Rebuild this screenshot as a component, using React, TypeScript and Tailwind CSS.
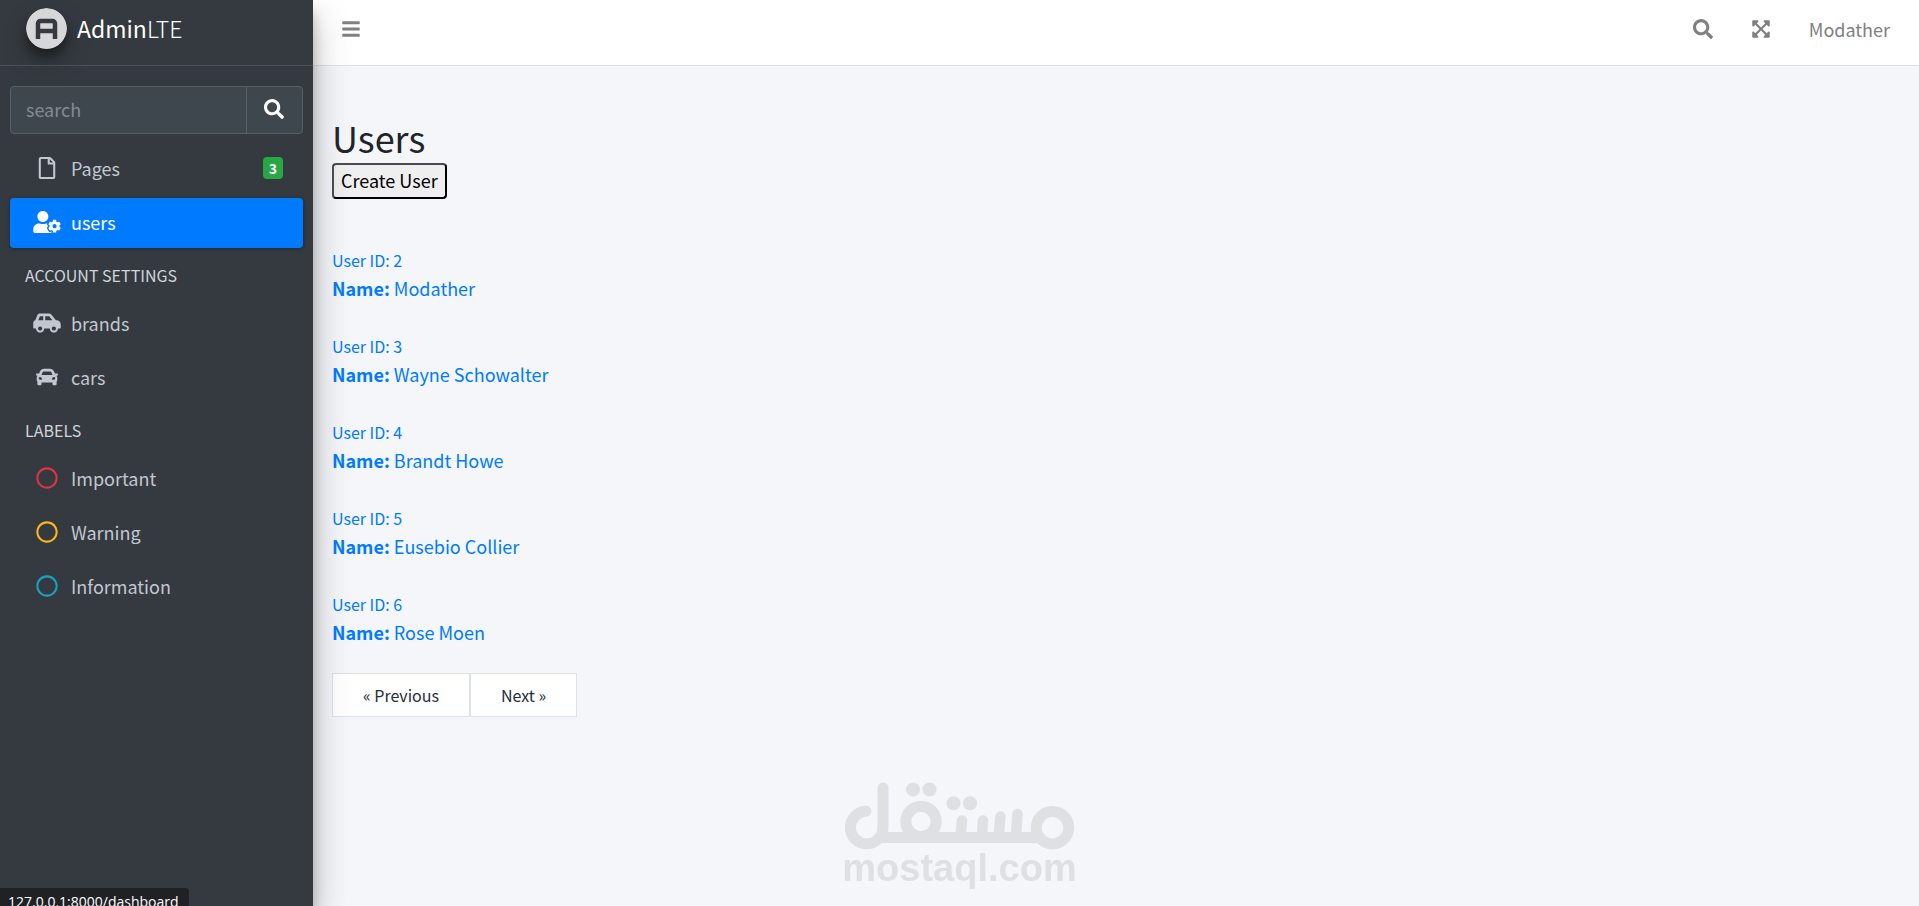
import { useState } from 'react'
import {
  FaBars,
  FaCar,
  FaCarSide,
  FaExpandArrowsAlt,
  FaRegCircle,
  FaRegFile,
  FaSearch,
  FaUserCog,
} from 'react-icons/fa'
import type { IconType } from 'react-icons'

interface NavItem {
  label: string
  icon: IconType
  iconClass?: string
  badge?: string
}

interface NavSection {
  header?: string
  items: NavItem[]
}

const sections: NavSection[] = [
  {
    items: [
      { label: 'Pages', icon: FaRegFile, badge: '3' },
      { label: 'users', icon: FaUserCog },
    ],
  },
  {
    header: 'ACCOUNT SETTINGS',
    items: [
      { label: 'brands', icon: FaCarSide },
      { label: 'cars', icon: FaCar },
    ],
  },
  {
    header: 'LABELS',
    items: [
      { label: 'Important', icon: FaRegCircle, iconClass: 'text-[#dc3545]' },
      { label: 'Warning', icon: FaRegCircle, iconClass: 'text-[#fdb71a]' },
      { label: 'Information', icon: FaRegCircle, iconClass: 'text-[#1aa2c4]' },
    ],
  },
]

const users = [
  { id: 2, name: 'Modather' },
  { id: 3, name: 'Wayne Schowalter' },
  { id: 4, name: 'Brandt Howe' },
  { id: 5, name: 'Eusebio Collier' },
  { id: 6, name: 'Rose Moen' },
]

function BrandLogo() {
  return (
    <svg
      viewBox="0 0 41 41"
      className="h-[41px] w-[41px] rounded-full shadow-[0_12px_24px_rgba(0,0,0,0.25),0_8px_8px_rgba(0,0,0,0.3)]"
      aria-hidden="true"
    >
      <circle cx="20.5" cy="20.5" r="20.5" fill="#d6d7d9" />
      <path d="M12 31V15.500a2.500 2.500 0 0 1 2.500-2.500h12a2.500 2.500 0 0 1 2.500 2.500V31M12 23h17" fill="none" stroke="#343a40" strokeWidth="4.500" />
    </svg>
  )
}

function Sidebar() {
  const [active, setActive] = useState('users')

  return (
    <aside className="relative z-10 w-[313px] shrink-0 bg-[#343a40] text-[#c2c7d0] shadow-[0_18px_35px_rgba(0,0,0,0.25),0_12px_12px_rgba(0,0,0,0.22)]">
      <a href="#" className="flex h-[66px] items-start gap-2.5 border-b border-[#4b545c] px-[26px] pt-2 text-[23px] leading-[41px] text-white">
        <BrandLogo />
        <span>
          Admin<span className="font-light">LTE</span>
        </span>
      </a>

      <div className="px-2.5 pt-5">
        <form className="mb-2.5 flex h-12 rounded border border-[#56606a] bg-[#3f474e]" onSubmit={(e) => e.preventDefault()}>
          <input
            type="search"
            aria-label="search"
            placeholder="search"
            className="min-w-0 flex-1 bg-transparent px-[15px] pb-0.5 text-white outline-none placeholder:text-[#868a94]"
          />
          <button type="submit" aria-label="Search" className="flex w-14 items-center justify-center border-l border-[#56606a] pr-0.5 pb-0.5 text-white">
            <FaSearch className="h-5 w-5" />
          </button>
        </form>

        <nav>
          {sections.map((section, index) => (
            <div key={index}>
              {section.header && (
                <h2 className="h-[47px] px-[15px] text-[16px] leading-[47px] text-[#d0d4db]">{section.header}</h2>
              )}
              <ul>
                {section.items.map(({ label, icon: Icon, iconClass = '', badge }) => (
                  <li key={label} className="mb-1">
                    <a
                      href="#"
                      onClick={() => setActive(label)}
                      className={`flex h-[50px] items-center rounded px-5 pb-0.5 ${
                        active === label ? 'bg-[#007bff] text-white shadow-[0_1px_4px_rgba(0,0,0,0.3)]' : ''
                      }`}
                    >
                      <span className="mr-[7px] flex w-[34px] justify-center">
                        <Icon className={`h-[22px] w-7 ${iconClass}`} />
                      </span>
                      {label}
                      {badge && (
                        <span className="ml-auto rounded bg-[#28a745] px-1.5 text-[14px] leading-[22px] font-bold text-white">
                          {badge}
                        </span>
                      )}
                    </a>
                  </li>
                ))}
              </ul>
            </div>
          ))}
        </nav>
      </div>
    </aside>
  )
}

function Navbar() {
  return (
    <header className="flex h-[66px] items-center border-b border-[#dee2e6] bg-white pr-[29px] pb-2 pl-7 text-[#808080]">
      <button type="button" aria-label="Toggle sidebar">
        <FaBars className="h-5 w-5" />
      </button>
      <div className="ml-auto flex items-center gap-[38px]">
        <button type="button" aria-label="Search">
          <FaSearch className="h-5 w-5" />
        </button>
        <button type="button" aria-label="Fullscreen">
          <FaExpandArrowsAlt className="h-5 w-5" />
        </button>
        <a href="#">Modather</a>
      </div>
    </header>
  )
}

function Watermark() {
  return (
    <div className="pointer-events-none fixed inset-x-0 bottom-5 z-20 flex flex-col items-center text-[#dfe0e2]">
      <svg viewBox="0 0 230 68" className="h-[68px] w-[230px]" fill="none" stroke="currentColor" strokeWidth="11" strokeLinecap="round" aria-hidden="true">
        <path d="M21 29.200A16.300 16.300 0 1 0 38 45.500V6M38 55.500H195" />
        <circle cx="76" cy="39.500" r="15.200" />
        <circle cx="207.500" cy="45.700" r="16.200" />
        <path d="M115.500 54L117 38.500M137 54L138 38.500M153.500 54L155.500 34.500M171 54L172.500 32" strokeWidth="10.500" />
        <g fill="currentColor" stroke="none">
          <circle cx="68" cy="7.500" r="7" />
          <circle cx="84.500" cy="7.500" r="7" />
          <circle cx="108.500" cy="21.300" r="7" />
          <circle cx="125" cy="21.300" r="7" />
        </g>
      </svg>
      <span className="font-['Liberation_Sans',sans-serif] text-[38px] leading-9 font-bold">mostaql.com</span>
    </div>
  )
}

export default function App() {
  return (
    <div className="flex min-h-screen bg-[#f4f6f9] font-['Noto_Sans_CJK_SC',sans-serif] text-[18px] leading-7 text-[#212529]">
      <Sidebar />

      <div className="min-w-0 flex-1">
        <Navbar />

        <main className="px-[19px] pt-12">
          <h1 className="mb-0.5 text-[36px] leading-[47px]">Users</h1>
          <button
            type="button"
            className="flex h-9 items-center rounded border-2 border-t-[#4c4c4f] border-r-black border-b-black border-l-[#4c4c4f] bg-[#efefef] px-[7px] pb-0.5 text-black"
          >
            Create User
          </button>

          <ul className="mt-[47px] text-[#007bff]">
            {users.map((user) => (
              <li key={user.id} className="mb-[30px] last:mb-[27px]">
                <a href="#" className="block">
                  <span className="block text-[16px]">User ID: {user.id}</span>
                  <strong>Name:</strong> {user.name}
                </a>
              </li>
            ))}
          </ul>

          {/* Pagination */}
          <nav className="flex text-[16px] leading-[42px] text-[#1f2d3d]">
            <a href="#" className="border border-[#dee2e6] bg-white px-[30px]">
              « Previous
            </a>
            <a href="#" className="border border-[#dee2e6] bg-white px-[30px]">
              Next »
            </a>
          </nav>
        </main>
      </div>

      <Watermark />

      {/* Link status bubble */}
      <div className="fixed -bottom-2.5 left-0 z-30 h-7 rounded-tr bg-[#202124] px-2 pr-2.5 font-['Open_Sans',sans-serif] text-[14px] leading-7 text-white">
        127.0.0.1:8000/dashboard
      </div>
    </div>
  )
}
